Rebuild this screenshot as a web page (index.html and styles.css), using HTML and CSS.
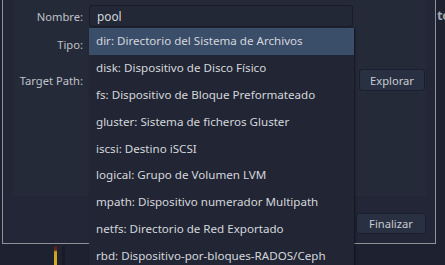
FILE: index.html
```html
<!DOCTYPE html>
<html lang="es">
<head>
    <meta charset="UTF-8">
    <title>Añadir pool</title>
    <link rel="stylesheet" href="styles.css">
</head>
<body>

    <div class="desktop">
        <!-- Dialog -->
        <div class="dialog">
            <div class="panel">
                <div class="form">
                    <label class="label">Nombre:</label>
                    <div class="entry">pool</div>
                    <span></span>

                    <label class="label">Tipo:</label>
                    <div class="combo"></div>
                    <span></span>

                    <label class="label row-path">Target Path:</label>
                    <div class="entry row-path"></div>
                    <button class="btn row-path">Explorar</button>
                </div>
            </div>
            <div class="footer">
                <button class="btn finish">Finalizar</button>
            </div>
        </div>

        <!-- Window behind, on the right -->
        <div class="side">to</div>
    </div>

    <div class="below">
        <span class="gauge"></span>
    </div>

    <!-- Combo popup -->
    <ul class="popup">
        <li class="selected">dir: Directorio del Sistema de Archivos</li>
        <li>disk: Dispositivo de Disco Físico</li>
        <li>fs: Dispositivo de Bloque Preformateado</li>
        <li>gluster: Sistema de ficheros Gluster</li>
        <li>iscsi: Destino iSCSI</li>
        <li>logical: Grupo de Volumen LVM</li>
        <li>mpath: Dispositivo numerador Multipath</li>
        <li>netfs: Directorio de Red Exportado</li>
        <li>rbd: Dispositivo-por-bloques-RADOS/Ceph</li>
    </ul>

</body>
</html>
```

FILE: styles.css
```css
/* Global */
* {
    margin: 0;
    padding: 0;
    box-sizing: border-box;
}

body {
    background: #1d2130;
    color: #d4d7dc;
    font-family: "Noto Sans", sans-serif;
    font-size: 11px;
    height: 265px;
    overflow: hidden;
    position: relative;
}

.desktop {
    display: flex;
    padding-left: 2px;
}

/* Dialog */
.dialog {
    width: 434px;
    height: 244px;
    background: #222636;
    border: 1px solid #8e9196;
    border-top: none;
    padding: 0 9px 0 10px;
    display: flex;
    flex-direction: column;
}

.panel {
    background: #252a39;
    height: 196px;
    padding-top: 5px;
}

.form {
    display: grid;
    grid-template-columns: 70px 264px 66px;
    grid-template-rows: 22px 22px 22px;
    column-gap: 6px;
    row-gap: 6px;
    align-items: center;
}

.form .row-path {
    margin-top: 16px;
}

.label {
    text-align: right;
    color: #bfc2c8;
    white-space: nowrap;
    font-size: 11.2px;
}

.entry,
.combo {
    height: 22px;
    background: #232837;
    border: 1px solid #191c27;
    border-radius: 3px;
    padding: 0 7px;
    line-height: 20px;
    font-size: 11.8px;
}

.btn {
    height: 22px;
    background: #283042;
    border: 1px solid #1b1f2b;
    border-radius: 3px;
    color: #c9ccd1;
    font: inherit;
    font-size: 11.2px;
}

.footer {
    display: flex;
    justify-content: flex-end;
    padding-top: 17px;
}

.finish {
    width: 70px;
    height: 21px;
}

/* Right strip */
.side {
    flex: 1;
    padding: 6px 0 0 1px;
    color: #a3a6ac;
    font-weight: bold;
    font-size: 13px;
    overflow: hidden;
    white-space: nowrap;
    letter-spacing: -0.5px;
}

/* Below the dialog */
.below {
    padding: 2px 0 0 54px;
}

.gauge {
    display: block;
    width: 3px;
    height: 20px;
    background: linear-gradient(#5a1a14 0, #6b2a12 20%, #c9a21e 30%, #d8b021 100%);
    box-shadow: 8px 0 0 #181b26;
}

/* Popup */
.popup {
    position: absolute;
    left: 89px;
    top: 28px;
    width: 265px;
    list-style: none;
    background: #222634;
    box-shadow: 1px 0 2px rgba(0, 0, 0, 0.5);
    font-size: 11.6px;
}

.popup li {
    height: 26.9px;
    line-height: 26.9px;
    padding-left: 7px;
    white-space: nowrap;
}

.popup li.selected {
    background: #3a4d69;
}
```
